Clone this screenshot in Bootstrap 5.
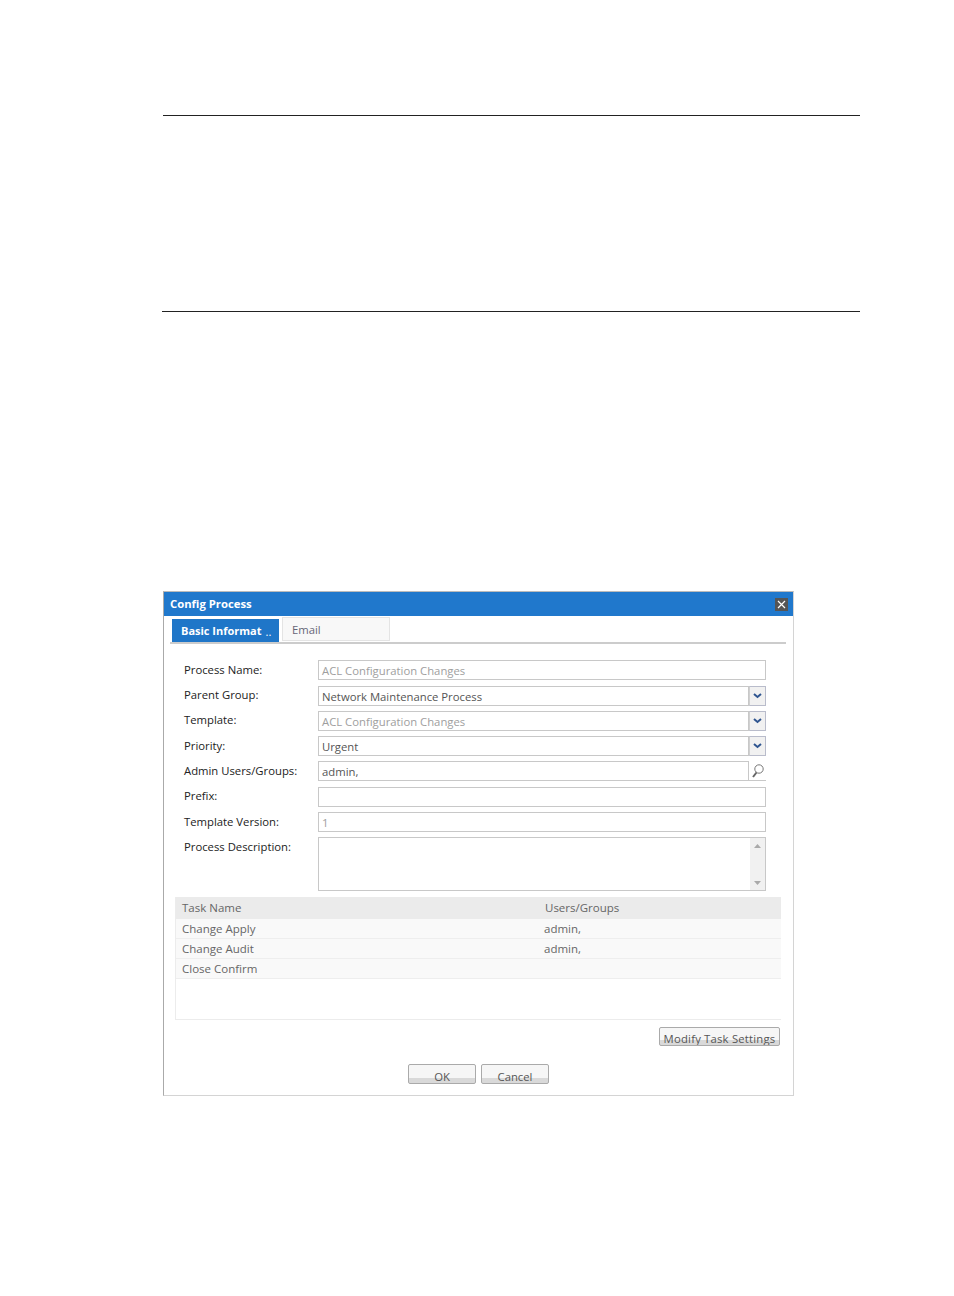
<!DOCTYPE html>
<html lang="en"><head><meta charset="utf-8"><title>Config Process</title>
<link href="https://cdn.jsdelivr.net/npm/bootstrap@5.3.0/dist/css/bootstrap.min.css" rel="stylesheet">
<style>
html,body{background:#fff;}
body{height:1296px;overflow:hidden;font-family:"Open Sans","Liberation Sans",sans-serif;font-size:11.3px;line-height:1;color:#222;}
.pg{padding:115px 94px 0 163px;}
.rule{height:1px;background:#222;}
.rule-b{margin:195px 0 279px -1px;}
.dlg{width:631px;height:505px;border:1px solid #d4d4d4;border-left-color:#aaa;border-top-color:#bbb;display:flex;flex-direction:column;}
.ttl{height:24px;background:#2078cc;color:#fff;font-weight:700;padding:0 5px 0 6px;font-size:11.3px;}
.cls{width:13px;height:13px;background:#555;display:flex;}
.tabs{height:28px;margin:0 7px 0 6px;border-bottom:2px solid #ccc;padding-left:2px;gap:3px;}
.tb1{width:107px;height:23px;margin-top:3px;background:#1f76c8;color:#fff;font-weight:700;font-size:11px;padding:0 0 1px 9px;}
.tb1 span{margin-left:4px;padding-top:3px;}
.tb2{width:108px;height:24px;margin-top:1px;background:#f8f8f8;border:1px solid #e4e4e4;padding:2px 0 0 9px;color:#667;}
.frm{padding:16.3px 27px 0 20px;display:flex;flex-direction:column;gap:5.3px;}
.fr{display:flex;height:20px;}
.fr-t{height:54px;}
.lb{width:134px;flex:none;padding-top:3.5px;color:#222;}
.bx{flex:1;min-width:0;border:1px solid #c8c8c8;padding:4px 3px 0;color:#555;background:#fff;white-space:nowrap;}
.dim{color:#9e9e9e;}
.cmb{width:17px;flex:none;background:#f1f1f1;border:1px solid #b9bccb;border-left-color:#d0d0d0;display:flex;align-items:center;justify-content:center;}
.srch{width:17px;flex:none;border-bottom:1px solid #c8c8c8;display:flex;align-items:center;justify-content:center;}
.sbar{width:15px;background:#f1f1f1;display:flex;flex-direction:column;justify-content:space-between;align-items:center;padding:6px 0 5px;}
.bxt{padding:0;display:flex;justify-content:flex-end;}
.grd{margin:6px 12px 0 11px;height:123px;border-left:1px solid #ececec;border-bottom:1px solid #ececec;color:#666;font-size:11.5px;}
.gh,.gr{display:flex;align-items:center;padding-left:6px;}
.gh{height:22px;background:#ebebeb;padding-bottom:1px;}
.gr{height:20px;background:#f9f9f9;border-bottom:1px solid #eee;}
.c1{width:362px;}
.gh .c1{width:363px;}
.acts{height:19px;margin:7px 13px 0 0;}
.bt{height:100%;border:1px solid #aaa;border-radius:2px;background:linear-gradient(#f6f6f6 0 70%,#d9d9d9 70%);color:#555;overflow:hidden;text-align:center;padding:6px 0 0;}
.btm{width:121px;letter-spacing:.2px;padding-top:5px;}
.foot{height:20px;margin-top:18px;gap:5px;}
.bts{width:68px;}
</style></head>
<body><div class="pg">
<div class="rule"></div>
<div class="rule rule-b"></div>
<div class="dlg">
 <div class="ttl d-flex align-items-center justify-content-between"><span>Config Process</span>
  <span class="cls"><svg width="13" height="13" viewBox="0 0 13 13"><path d="M3 3l7 7M10 3l-7 7" stroke="#fff" stroke-width="1.2"/></svg></span></div>
 <div class="tabs d-flex align-items-start">
  <div class="tb1 d-flex align-items-center">Basic Informat<span class="fw-normal">..</span></div>
  <div class="tb2 d-flex align-items-center">Email</div>
 </div>
 <div class="frm">
  <div class="fr"><div class="lb">Process Name:</div><div class="bx dim">ACL Configuration Changes</div></div>
  <div class="fr"><div class="lb">Parent Group:</div><div class="bx">Network Maintenance Process</div><div class="cmb"><svg width="9" height="6" viewBox="0 0 9 6"><path d="M1 1l3.5 3L8 1" fill="none" stroke="#2f5590" stroke-width="2"/></svg></div></div>
  <div class="fr"><div class="lb">Template:</div><div class="bx dim">ACL Configuration Changes</div><div class="cmb"><svg width="9" height="6" viewBox="0 0 9 6"><path d="M1 1l3.5 3L8 1" fill="none" stroke="#2f5590" stroke-width="2"/></svg></div></div>
  <div class="fr"><div class="lb">Priority:</div><div class="bx">Urgent</div><div class="cmb"><svg width="9" height="6" viewBox="0 0 9 6"><path d="M1 1l3.5 3L8 1" fill="none" stroke="#2f5590" stroke-width="2"/></svg></div></div>
  <div class="fr"><div class="lb">Admin Users/Groups:</div><div class="bx">admin,</div><div class="srch"><svg width="13" height="16" viewBox="0 0 13 16"><circle cx="8" cy="6" r="4.2" fill="none" stroke="#777" stroke-width="1"/><path d="M5.5 9.5L2 14" stroke="#666" stroke-width="2"/></svg></div></div>
  <div class="fr"><div class="lb">Prefix:</div><div class="bx"></div></div>
  <div class="fr"><div class="lb">Template Version:</div><div class="bx dim">1</div></div>
  <div class="fr fr-t"><div class="lb">Process Description:</div><div class="bx bxt"><div class="sbar"><svg width="7" height="4" viewBox="0 0 7 4"><path d="M3.500 0L7 4H0z" fill="#aaa"/></svg><svg width="7" height="4" viewBox="0 0 7 4"><path d="M0 0h7L3.500 4z" fill="#aaa"/></svg></div></div></div>
 </div>
 <div class="grd">
  <div class="gh"><div class="c1">Task Name</div><div>Users/Groups</div></div>
  <div class="gr"><div class="c1">Change Apply</div><div>admin,</div></div>
  <div class="gr"><div class="c1">Change Audit</div><div>admin,</div></div>
  <div class="gr"><div class="c1">Close Confirm</div></div>
 </div>
 <div class="acts d-flex justify-content-end"><div class="bt btm">Modify Task Settings</div></div>
 <div class="foot d-flex justify-content-center"><div class="bt bts">OK</div><div class="bt bts">Cancel</div></div>
</div>
</div>
</body></html>
